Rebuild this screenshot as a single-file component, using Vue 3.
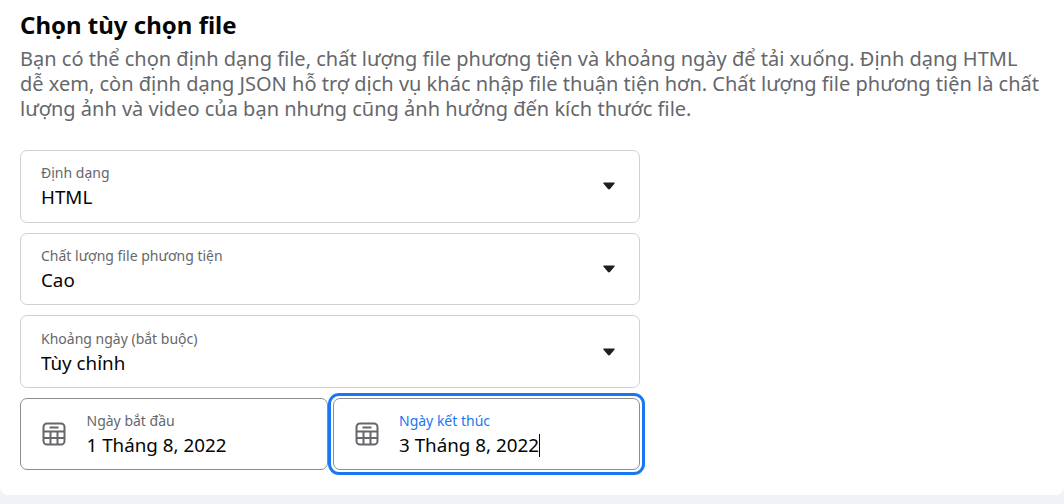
<script setup>
const selects = [
	{ label: 'Định dạng', value: 'HTML' },
	{ label: 'Chất lượng file phương tiện', value: 'Cao' },
	{ label: 'Khoảng ngày (bắt buộc)', value: 'Tùy chỉnh' },
];
</script>

<template>
	<div class="page">
		<div class="card">
			<h2 class="title">Chọn tùy chọn file</h2>
			<p class="desc">
				Bạn có thể chọn định dạng file, chất lượng file phương tiện và khoảng ngày để tải xuống. Định dạng HTML<br />
				dễ xem, còn định dạng JSON hỗ trợ dịch vụ khác nhập file thuận tiện hơn. Chất lượng file phương tiện là chất<br />
				lượng ảnh và video của bạn nhưng cũng ảnh hưởng đến kích thước file.
			</p>
			<div class="form">
				<div v-for="item in selects" :key="item.label" class="field select">
					<div class="text">
						<span class="label">{{ item.label }}</span>
						<span class="value">{{ item.value }}</span>
					</div>
					<svg class="caret" width="12" height="8" viewBox="0 0 12 8">
						<path d="M1 0.5h10c.6 0 .9.6.6 1L7 7c-.5.6-1.500.6-2 0L.4 1.500C.1 1.100.4.5 1 .5z" fill="#1c1e21" />
					</svg>
				</div>
				<div class="dates">
					<div class="field date">
						<svg class="cal" width="24" height="24" viewBox="0 0 24 24" fill="none" stroke="#65676b" stroke-width="2">
							<rect x="1.500" y="1.500" width="21" height="21" rx="3.500" />
							<path d="M7.500 5.500h9" />
							<path d="M1.500 9.500h21M1.500 16h21M8.500 9.500v13M15.500 9.500v13" />
						</svg>
						<div class="text">
							<span class="label">Ngày bắt đầu</span>
							<span class="value">1 Tháng 8, 2022</span>
						</div>
					</div>
					<div class="field date focused">
						<svg class="cal" width="24" height="24" viewBox="0 0 24 24" fill="none" stroke="#65676b" stroke-width="2">
							<rect x="1.500" y="1.500" width="21" height="21" rx="3.500" />
							<path d="M7.500 5.500h9" />
							<path d="M1.500 9.500h21M1.500 16h21M8.500 9.500v13M15.500 9.500v13" />
						</svg>
						<div class="text">
							<span class="label blue">Ngày kết thúc</span>
							<span class="value">3 Tháng 8, 2022<i class="cursor"></i></span>
						</div>
					</div>
				</div>
			</div>
		</div>
	</div>
</template>

<style>
html,
body {
	margin: 0;
	background: #f0f2f5;
}
</style>

<style scoped>
.page {
	width: 1064px;
	height: 504px;
	overflow: hidden;
	font-family: "Noto Sans", "Open Sans", sans-serif;
}

.card {
	height: 495px;
	box-sizing: border-box;
	padding: 11px 0 0 20px;
	background: #fff;
	border-radius: 0 0 8px 8px;
}

.title {
	margin: 0 0 7px;
	font-size: 24px;
	line-height: 28px;
	font-weight: 700;
	color: #050505;
}

.desc {
	margin: 0;
	font-size: 20px;
	line-height: 25px;
	color: #65676b;
	white-space: nowrap;
}

.form {
	width: 620px;
	margin-top: 29.2px;
	display: flex;
	flex-direction: column;
	gap: 10.2px;
}

.field {
	height: 72.4px;
	box-sizing: border-box;
	border: 1px solid #ced0d4;
	border-radius: 7px;
	background: #fff;
	display: flex;
	align-items: center;
}

.select {
	justify-content: space-between;
	padding: 0 24px 0 20px;
}

.text {
	display: flex;
	flex-direction: column;
	padding-top: 1px;
}

.label {
	font-size: 14px;
	line-height: 21px;
	color: #65676b;
}

.label.blue {
	color: #1877f2;
}

.value {
	font-size: 18.8px;
	line-height: 28px;
	color: #050505;
	white-space: nowrap;
}

.caret {
	display: block;
}

.dates {
	display: flex;
	gap: 5px;
}

.date {
	flex: 1;
	gap: 20.5px;
	padding-left: 21px;
	border-color: #8a8d91;
}

.focused {
	position: relative;
}

.focused::after {
	content: "";
	position: absolute;
	inset: -5.5px;
	border: 3px solid #1877f2;
	border-radius: 11px;
}

.cursor {
	display: inline-block;
	width: 1px;
	height: 23px;
	background: #050505;
	vertical-align: -5px;
}
</style>
